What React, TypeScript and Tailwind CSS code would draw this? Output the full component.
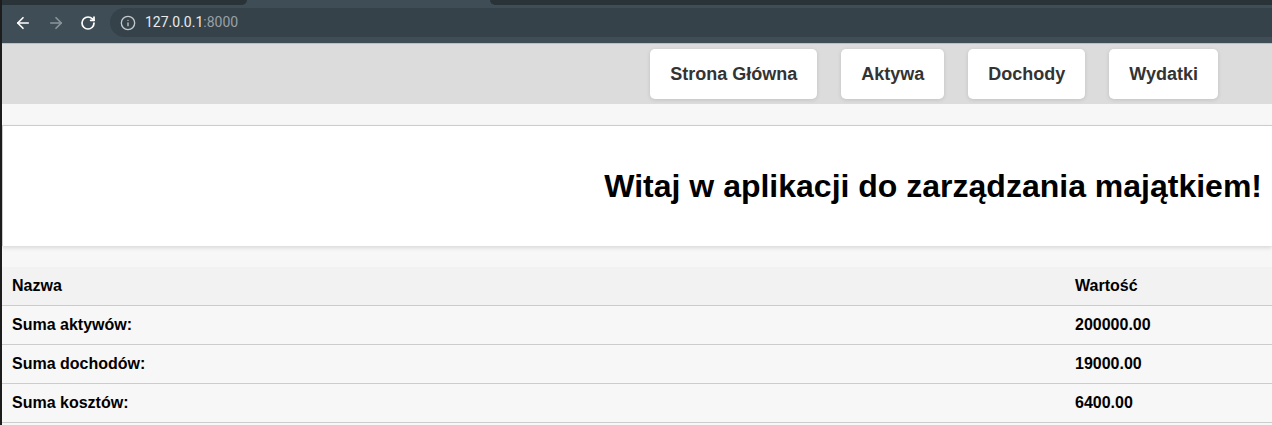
import { ArrowLeft, ArrowRight, RotateCw, Info } from 'lucide-react'

const navItems = ['Strona Główna', 'Aktywa', 'Dochody', 'Wydatki']

const rows = [
  { name: 'Suma aktywów:', value: '200000.00' },
  { name: 'Suma dochodów:', value: '19000.00' },
  { name: 'Suma kosztów:', value: '6400.00' },
]

function BrowserBar() {
  return (
    <div className="h-[44px] flex flex-col bg-[#3f4e56] border-b border-[#b9c0c3]">
      {/* tab strip */}
      <div className="h-[5px] flex">
        <div className="w-[245px] bg-[#2a3338] rounded-br-[6px]" />
        <div className="w-[243px]" />
        <div className="flex-1 bg-[#2a3338] rounded-bl-[6px]" />
      </div>
      <div className="flex-1 flex items-center pt-[1px] pb-[4px]">
        <div className="w-[42px] flex justify-center">
          <ArrowLeft size={18} strokeWidth={2.2} className="text-white" />
        </div>
        <div className="w-[24px] flex justify-center">
          <ArrowRight size={18} strokeWidth={2.2} className="text-[#8b969b]" />
        </div>
        <div className="w-[40px] flex justify-center">
          <RotateCw size={16} strokeWidth={2.6} className="text-white" />
        </div>
        <div className="flex-1 h-[29px] ml-[2px] bg-[#35424a] rounded-l-full flex items-center pl-[10px] font-['Roboto',sans-serif] text-[14px]">
          <Info size={16} strokeWidth={2} className="text-[#c4c9cc]" />
          <span className="ml-[9px] text-[#e8eaed]">127.0.0.1</span>
          <span className="text-[#9aa0a6]">:8000</span>
        </div>
      </div>
    </div>
  )
}

export default function App() {
  return (
    <div className="flex min-h-screen bg-[#f7f7f7] font-['Liberation_Sans',Arial,sans-serif]">
      <div className="w-[2px] shrink-0 bg-[#1c1c1c]" />
      <div className="flex-1 flex flex-col min-w-0 overflow-hidden">
        <BrowserBar />

        <nav className="h-[60px] bg-[#dcdcdc] flex justify-end items-start pt-[5px] pr-[54px] gap-[24px]">
          {navItems.map((item) => (
            <button
              key={item}
              className="h-[50px] px-[20px] bg-white rounded-[5px] shadow-[0_1px_4px_rgba(0,0,0,0.12)] text-[18px] font-bold text-[#333]"
            >
              {item}
            </button>
          ))}
        </nav>

        <div className="h-[21px]" />

        <header className="h-[121px] bg-white border-t border-l border-[#cccccc] shadow-[0_2px_4px_rgba(0,0,0,0.12)] flex items-center justify-end pr-[10px]">
          <h1 className="text-[32px] font-bold text-black leading-[37px]">
            Witaj w aplikacji do zarządzania majątkiem!
          </h1>
        </header>

        <div className="h-[21px]" />

        <div className="text-[16px] font-bold text-black">
          <div className="grid grid-cols-[1063px_1fr] h-[39px] items-center bg-[#f2f2f2] border-b border-[#cccccc]">
            <div className="pl-[10px]">Nazwa</div>
            <div className="pl-[10px]">Wartość</div>
          </div>
          {rows.map((row) => (
            <div
              key={row.name}
              className="grid grid-cols-[1063px_1fr] h-[39px] items-center bg-[#f7f7f7] border-b border-[#cccccc]"
            >
              <div className="pl-[10px]">{row.name}</div>
              <div className="pl-[10px]">{row.value}</div>
            </div>
          ))}
        </div>
      </div>
    </div>
  )
}
